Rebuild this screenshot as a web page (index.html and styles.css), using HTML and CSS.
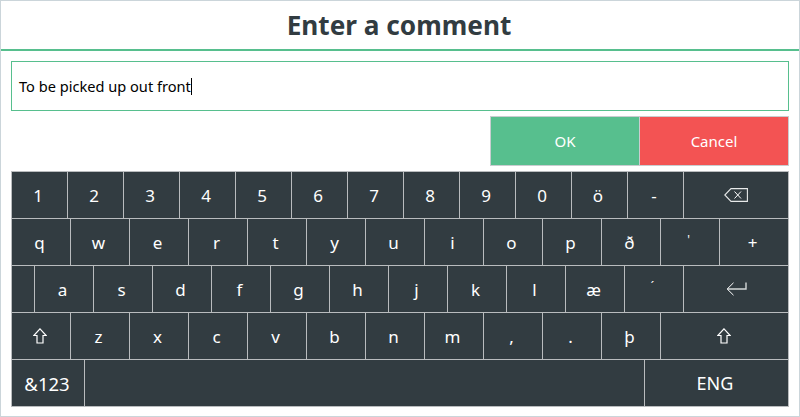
FILE: index.html
```html
<!DOCTYPE html>
<html lang="en">
<head>
  <meta charset="UTF-8" />
  <meta name="viewport" content="width=device-width, initial-scale=1.0" />
  <title>Enter a comment</title>
  <link rel="stylesheet" href="styles.css">
</head>
<body>
  <div class="dialog">
    <h1 class="title">Enter a comment</h1>
    <div class="content">
      <div class="comment-box"><span class="comment-text">To be picked up out front</span></div>
      <div class="actions">
        <button class="action ok">OK</button>
        <button class="action cancel">Cancel</button>
      </div>
      <div class="keyboard">
        <div class="row row-num">
          <div class="key">1</div><div class="key">2</div><div class="key">3</div><div class="key">4</div><div class="key">5</div><div class="key">6</div><div class="key">7</div><div class="key">8</div><div class="key">9</div><div class="key">0</div><div class="key">ö</div><div class="key">-</div>
          <div class="key grow icon-key">
            <svg class="icon" width="24" height="14" viewBox="0 0 24 14"><path d="M7 .6H23.4V13.4H7L.8 7Z" fill="none" stroke="#e8eaea" stroke-width="1.1"/><path d="M10.5 3.5 17 10.5M17 3.5 10.5 10.5" fill="none" stroke="#fff"/></svg>
          </div>
        </div>
        <div class="row row-q">
          <div class="key">q</div><div class="key">w</div><div class="key">e</div><div class="key">r</div><div class="key">t</div><div class="key">y</div><div class="key">u</div><div class="key">i</div><div class="key">o</div><div class="key">p</div><div class="key">ð</div><div class="key small">'</div>
          <div class="key grow">+</div>
        </div>
        <div class="row row-a">
          <div class="key spacer"></div>
          <div class="key">a</div><div class="key">s</div><div class="key">d</div><div class="key">f</div><div class="key">g</div><div class="key">h</div><div class="key">j</div><div class="key">k</div><div class="key">l</div><div class="key">æ</div><div class="key small">´</div>
          <div class="key grow icon-key">
            <svg class="icon" width="21" height="14" viewBox="0 0 21 14"><path d="M20 .5V7H1.5" fill="none" stroke="#d4d7d8" stroke-width="1.4"/><path d="M7.5 .8 1.2 7 7.5 13.2" fill="none" stroke="#fff"/></svg>
          </div>
        </div>
        <div class="row row-z">
          <div class="key icon-key shift">
            <svg class="icon" width="14" height="16" viewBox="0 0 14 16"><path d="M7 .8 13.2 7.5H10V15H4V7.5H.8Z" fill="none" stroke="#fff" stroke-width="1.2"/></svg>
          </div>
          <div class="key">z</div><div class="key">x</div><div class="key">c</div><div class="key">v</div><div class="key">b</div><div class="key">n</div><div class="key">m</div><div class="key">,</div><div class="key">.</div><div class="key">þ</div>
          <div class="key grow icon-key shift">
            <svg class="icon" width="14" height="16" viewBox="0 0 14 16"><path d="M7 .8 13.2 7.5H10V15H4V7.5H.8Z" fill="none" stroke="#fff" stroke-width="1.2"/></svg>
          </div>
        </div>
        <div class="row row-bottom">
          <div class="key mode">&amp;123</div>
          <div class="key space"></div>
          <div class="key grow eng">ENG</div>
        </div>
      </div>
    </div>
  </div>
</body>
</html>
```
FILE: styles.css
```css
* {
  box-sizing: border-box;
}
html, body {
  height: 100%;
}
body {
  margin: 0;
  font-family: 'Noto Sans', 'Open Sans', sans-serif;
  background: white;
}
.dialog {
  height: 417px;
  border: 1px solid #cbd5da;
  display: flex;
  flex-direction: column;
}
.title {
  margin: 0;
  height: 50px;
  padding-right: 2px;
  border-bottom: 2px solid #57bf8e;
  color: #323c41;
  font-size: 26.2px;
  font-weight: bold;
  line-height: 48px;
  text-align: center;
}
.content {
  padding: 10px 10px 0;
}
.comment-box {
  height: 50px;
  border: 1px solid #57bf8e;
  padding-left: 7px;
  display: flex;
  align-items: center;
}
.comment-text {
  font-size: 14.6px;
  line-height: 16px;
  color: #000;
  border-right: 1px solid #000;
  height: 17px;
  margin-top: 1px;
}
.actions {
  display: flex;
  justify-content: flex-end;
  margin-top: 5px;
}
.action {
  width: 149px;
  height: 50px;
  border: 1px solid #c9cdd0;
  color: white;
  font-family: inherit;
  font-size: 15px;
  padding: 0;
}
.action.ok {
  background: #57bf8e;
  border-right: 0;
}
.action.cancel {
  background: #f35353;
  width: 150px;
}
.keyboard {
  margin-top: 5px;
  border: 1px solid #b9bcbe;
  background: #323c41;
  width: 778px;
}
.row {
  display: flex;
  height: 47px;
  border-bottom: 1px solid #b9bcbe;
}
.row:last-child {
  height: 46px;
  border-bottom: 0;
}
.key {
  flex: none;
  width: 59px;
  display: flex;
  align-items: center;
  justify-content: center;
  color: white;
  font-size: 17px;
  padding-right: 3px;
  border-left: 1px solid #b9bcbe;
}
.key:first-child {
  border-left: 0;
}
.icon-key {
  padding-right: 0;
}
.icon-key.shift {
  padding-right: 2px;
}
.row-num .key {
  width: 56px;
}
.row-num .key:first-child {
  width: 55px;
}
.row-q .key:first-child,
.row-z .key:first-child {
  width: 58px;
}
.row-a .key.spacer {
  width: 22px;
}
.row .key.grow {
  flex: 1;
}
.row-bottom .mode {
  width: 72px;
  font-size: 18.5px;
  padding-right: 2px;
}
.row-bottom .space {
  width: 560px;
}
.row-bottom .eng {
  font-size: 18px;
}
.small {
  font-size: 12px;
  padding-bottom: 6px;
}
```
